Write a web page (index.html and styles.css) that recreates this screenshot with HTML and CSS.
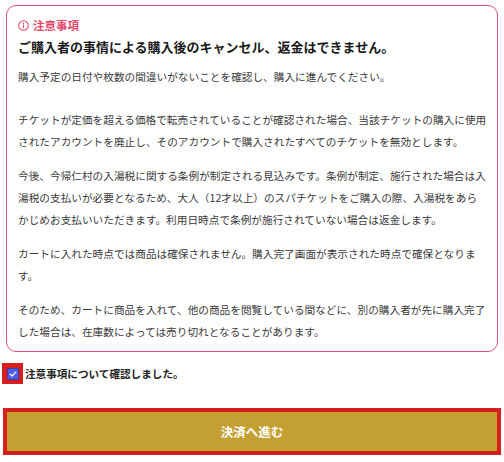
FILE: index.html
```html
<!DOCTYPE html>
<html lang="ja">
<head>
<meta charset="utf-8">
<title>注意事項</title>
<link rel="stylesheet" href="styles.css">
</head>
<body>
<div class="page">
  <section class="notice">
    <div class="notice-title">
      <svg class="info-icon" viewBox="0 0 12 12" width="11" height="11" aria-hidden="true">
        <circle cx="6" cy="6" r="5.2" fill="none" stroke="currentColor" stroke-width="1.1"/>
        <circle cx="6" cy="3.6" r="0.8" fill="currentColor"/>
        <rect x="5.35" y="5" width="1.3" height="4" fill="currentColor"/>
      </svg>
      <span>注意事項</span>
    </div>
    <h2 class="notice-heading">ご購入者の事情による購入後のキャンセル、返金はできません。</h2>
    <p class="lead">購入予定の日付や枚数の間違いがないことを確認し、購入に進んでください。</p>
    <p>チケットが定価を超える価格で転売されていることが確認された場合、当該チケットの購入に使用されたアカウントを廃止し、そのアカウントで購入されたすべてのチケットを無効とします。</p>
    <p>今後、今帰仁村の入湯税に関する条例が制定される見込みです。条例が制定、施行された場合は入湯税の支払いが必要となるため、大人（12才以上）のスパチケットをご購入の際、入湯税をあらかじめお支払いいただきます。利用日時点で条例が施行されていない場合は返金します。</p>
    <p>カートに入れた時点では商品は確保されません。購入完了画面が表示された時点で確保となります。</p>
    <p>そのため、カートに商品を入れて、他の商品を閲覧している間などに、別の購入者が先に購入完了した場合は、在庫数によっては売り切れとなることがあります。</p>
  </section>

  <label class="confirm">
    <span class="check-focus">
      <span class="check-box">
        <svg viewBox="0 0 12 12" width="10" height="10" aria-hidden="true">
          <path d="M2.6 6.2 L5 8.4 L9.4 3.8" fill="none" stroke="#fff" stroke-width="1.5" stroke-linecap="round" stroke-linejoin="round"/>
        </svg>
      </span>
    </span>
    <span class="confirm-text">注意事項について確認しました。</span>
  </label>

  <button class="pay-button" type="button">決済へ進む</button>
</div>
</body>
</html>
```

FILE: styles.css
```css
html, body {
  margin: 0;
  padding: 0;
  background: #ffffff;
}

body {
  font-family: "Noto Sans CJK JP", "Noto Sans", sans-serif;
  color: #333333;
}

.page {
  width: 504px;
  box-sizing: border-box;
  padding: 5px 2px 0;
}

.notice {
  margin: 0 4px;
  border: 1px solid #d6557b;
  border-radius: 10px;
  padding: 8px 9.5px 8px 11px;
}

.notice-title {
  display: flex;
  align-items: center;
  gap: 4px;
  height: 22px;
  color: #e1466b;
  font-size: 11.5px;
  font-weight: 700;
}

.info-icon {
  display: block;
  color: #e1466b;
}

.notice-heading {
  margin: 0 0 8px;
  font-size: 13px;
  line-height: 22px;
  font-weight: 700;
  color: #1a1a1a;
}

.notice p {
  margin: 0 0 12px;
  font-size: 10.667px;
  line-height: 22px;
  color: #3a3a3a;
}

.notice p.lead {
  margin-bottom: 21px;
}

.notice p:last-child {
  margin-bottom: 0;
}

.confirm {
  display: flex;
  align-items: center;
  gap: 2px;
  margin-top: 11px;
}

.check-focus {
  display: flex;
  align-items: center;
  justify-content: center;
  width: 21px;
  height: 21px;
  background: #d71f20;
}

.check-box {
  display: flex;
  align-items: center;
  justify-content: center;
  width: 12px;
  height: 12px;
  box-sizing: border-box;
  background: #4d5de8;
  border: 1px solid #3a3fa8;
  border-radius: 1px;
}

.check-box svg {
  display: block;
}

.confirm-text {
  font-size: 10.6px;
  font-weight: 700;
  color: #222222;
}

.pay-button {
  display: block;
  width: 498px;
  height: 47px;
  margin: 24px 0 0 1px;
  box-sizing: border-box;
  border: 4px solid #d71f20;
  background: #c49f31;
  color: #ffffff;
  font-family: inherit;
  font-size: 12.5px;
  font-weight: 700;
  text-align: center;
  padding: 0;
}
```
